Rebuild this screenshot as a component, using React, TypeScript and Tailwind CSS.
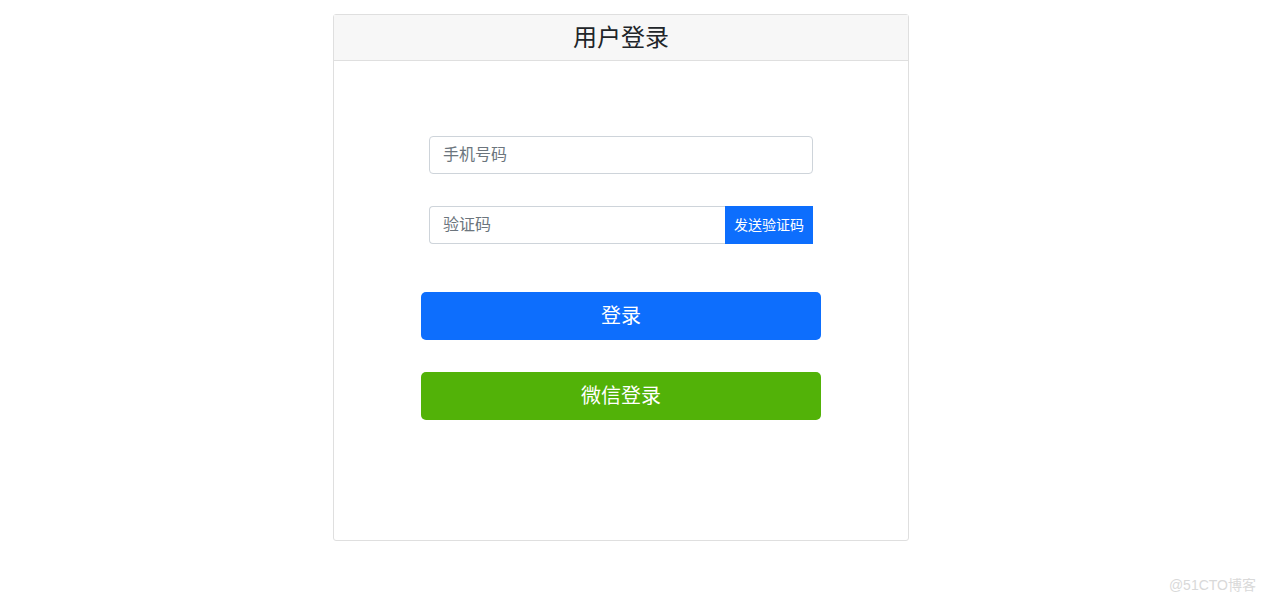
import { FC } from "react";

const font = { fontFamily: '"Liberation Sans", "Noto Sans CJK SC", sans-serif' };

const App: FC = () => {
    return (
        <div className="relative w-[1264px] h-[602px] bg-white" style={font}>
            <div className="pt-[14px] pl-[333px]">
                <div className="w-[576px] h-[527px] border border-[#dfdfdf] rounded-[3px] flex flex-col">
                    <div className="h-[46px] bg-[#f7f7f7] border-b border-[#dfdfdf] flex items-center justify-center text-[24px] text-[#212529]">
                        用户登录
                    </div>
                    <div className="flex flex-col items-center pt-[75px]">
                        <input
                            type="text"
                            placeholder="手机号码"
                            className="w-[384px] h-[38px] border border-[#ced4da] rounded-[4px] px-[13px] text-[16px] placeholder:text-[#6c757d] outline-none"
                        />
                        <div className="w-[384px] h-[38px] mt-[32px] flex">
                            <input
                                type="text"
                                placeholder="验证码"
                                className="flex-1 min-w-0 h-full border border-[#ced4da] border-r-0 rounded-l-[4px] px-[13px] text-[16px] placeholder:text-[#6c757d] outline-none"
                            />
                            <button className="w-[88px] h-full bg-[#0d6efd] text-white text-[14px]">
                                发送验证码
                            </button>
                        </div>
                        <button className="w-[400px] h-[48px] mt-[48px] bg-[#0d6efd] text-white text-[20px] rounded-[5px]">
                            登录
                        </button>
                        <button className="w-[400px] h-[48px] mt-[32px] bg-[#52b208] text-white text-[20px] rounded-[5px]">
                            微信登录
                        </button>
                    </div>
                </div>
            </div>
            <div className="absolute right-[8px] bottom-[6px] text-[14px] text-[#d9d9d9]">@51CTO博客</div>
        </div>
    );
};

export default App;
